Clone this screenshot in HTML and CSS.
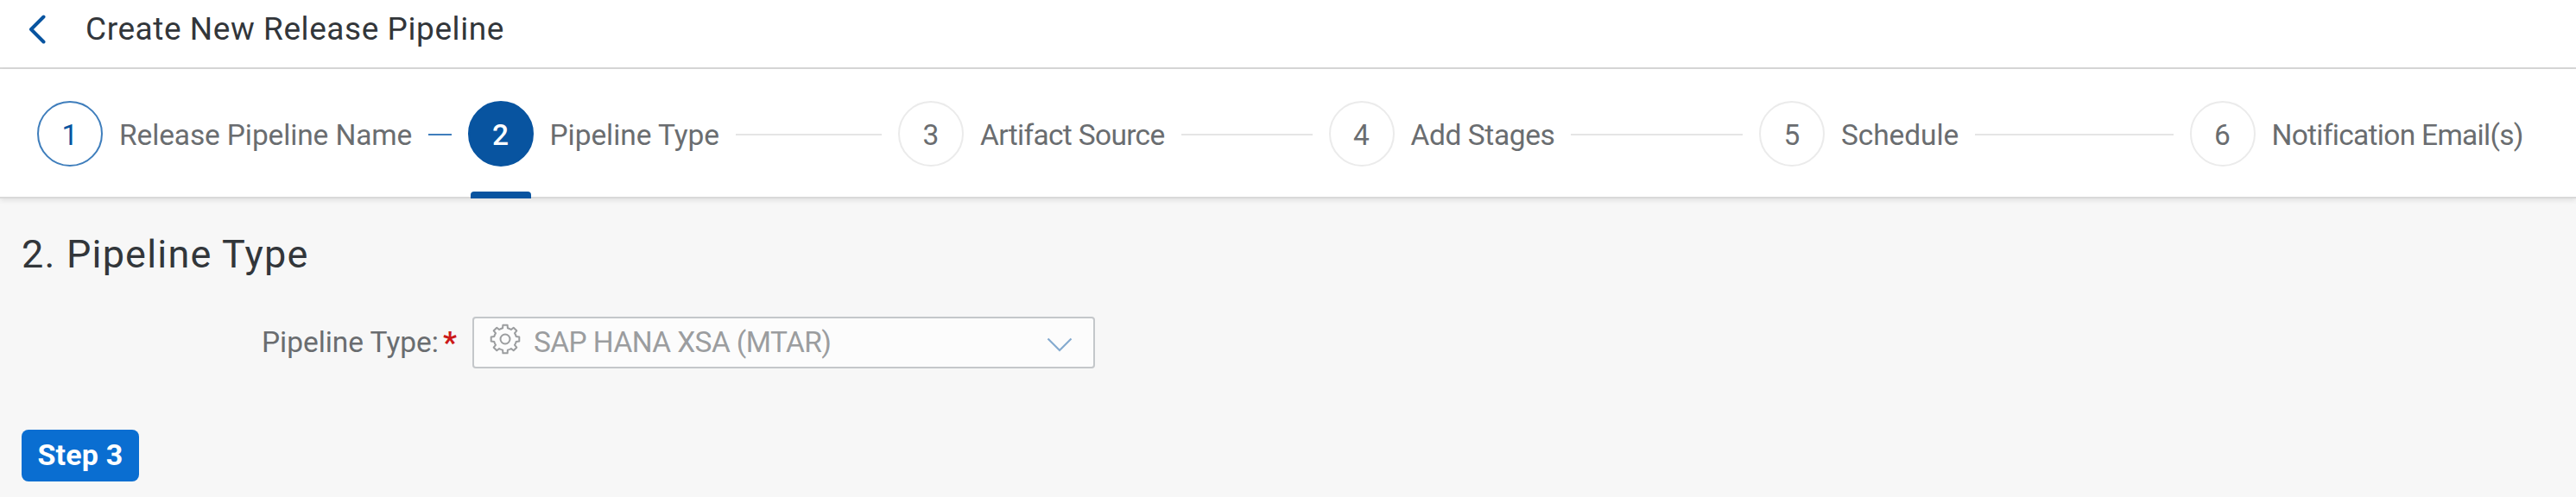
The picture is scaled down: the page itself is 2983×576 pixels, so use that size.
FILE: index.html
```html
<!DOCTYPE html>
<html lang="en">
<head>
<meta charset="utf-8">
<title>Create New Release Pipeline</title>
<link rel="stylesheet" href="styles.css">
</head>
<body>
<header class="page-header">
  <svg class="back" viewBox="0 0 20 34"><path d="M17.500 2.500 3 17l14.500 14.500"/></svg>
  <h1 class="title">Create New Release Pipeline</h1>
</header>
<nav class="wizard">
  <div class="step done"><span class="num">1</span><span class="label l1">Release Pipeline Name</span><span class="line"></span></div>
  <div class="step current"><span class="num">2</span><span class="label l2">Pipeline Type</span><span class="line"></span></div>
  <div class="step"><span class="num">3</span><span class="label l3">Artifact Source</span><span class="line"></span></div>
  <div class="step"><span class="num">4</span><span class="label l4">Add Stages</span><span class="line"></span></div>
  <div class="step"><span class="num">5</span><span class="label l5">Schedule</span><span class="line"></span></div>
  <div class="step last"><span class="num">6</span><span class="label l6">Notification Email(s)</span></div>
</nav>
<main class="content">
  <h2 class="heading"><span>2. Pipeline Type</span></h2>
  <div class="field">
    <span class="field-label">Pipeline Type:</span><span class="required">*</span>
    <div class="select">
      <svg class="gear" viewBox="-18 -18 36 36"><path d="M12.700-2.900 16.300-2.600V2.600L12.700 2.900A13 13 0 0 1 11 6.900L13.300 9.700 9.700 13.300 6.900 11A13 13 0 0 1 2.900 12.700L2.600 16.300H-2.600L-2.900 12.700A13 13 0 0 1-6.900 11L-9.700 13.300-13.300 9.700-11 6.900A13 13 0 0 1-12.700 2.900L-16.300 2.600V-2.600L-12.700-2.900A13 13 0 0 1-11-6.900L-13.300-9.700-9.700-13.300-6.900-11A13 13 0 0 1-2.900-12.700L-2.600-16.300H2.600L2.900-12.700A13 13 0 0 1 6.900-11L9.700-13.300 13.300-9.700 11-6.900A13 13 0 0 1 12.700-2.900Z"/><circle r="5.500"/></svg>
      <span class="value">SAP HANA XSA (MTAR)</span>
      <svg class="arrow" viewBox="0 0 30 18"><path d="M1.500 1.500 15 15 28.500 1.500"/></svg>
    </div>
  </div>
  <button class="next"><span>Step 3</span></button>
</main>
</body>
</html>
```
FILE: styles.css
```css
* { box-sizing: border-box; }
body { margin: 0; height: 576px; overflow: hidden; background: #f7f7f7; font-family: Roboto, "Liberation Sans", sans-serif; color: #32363a; }
svg { fill: none; flex: none; }
.page-header { height: 80px; display: flex; align-items: flex-start; padding: 17px 0 0 33px; background: #fff; border-bottom: 2px solid #d9d9d9; }
.back { width: 20px; height: 34px; stroke: #0854a0; stroke-width: 4; stroke-linecap: round; stroke-linejoin: round; }
.title { margin: -4px 0 0 46px; font-size: 37px; line-height: 42px; font-weight: 400; letter-spacing: .560px; white-space: nowrap; }
.wizard { height: 150px; display: flex; padding: 37px 59px 0 43px; background: #fff; border-bottom: 2px solid #d9d9d9; box-shadow: 0 2px 6px rgba(0,0,0,.1); }
.step { position: relative; flex: none; width: 498.500px; height: 76px; display: flex; align-items: center; color: #6a6d70; font-size: 33.500px; white-space: nowrap; }
.num { flex: none; width: 76px; height: 76px; margin-right: 19px; padding-top: 3px; border: 2px solid #ebebeb; border-radius: 50%; display: flex; align-items: center; justify-content: center; }
.label { flex: none; padding-top: 3px; }
.l1 { letter-spacing: -.130px; }
.l2 { letter-spacing: -.060px; }
.l3 { letter-spacing: -.670px; }
.l4 { letter-spacing: -.400px; }
.l5 { letter-spacing: -.100px; }
.l6 { letter-spacing: -.700px; }
.line { flex: 1; height: 2px; margin: 2px 19px 0; background: #e5e5e5; }
.done .num { border-color: #3f7ebc; color: #0854a0; }
.done .line { background: #3f7ebc; }
.current .num { background: #0854a0; border-color: #0854a0; color: #fff; font-weight: 500; }
.current::after { content: ""; position: absolute; left: 3.500px; top: 105px; width: 70px; height: 8px; background: #0854a0; border-radius: 4px 4px 0 0; }
.content { padding: 39px 25px 0; }
.heading { margin: 0; font-size: 45px; line-height: 52px; font-weight: 400; letter-spacing: 1.200px; }
.field { display: flex; align-items: center; margin-top: 46px; padding-left: 278px; height: 60px; font-size: 33.500px; color: #6a6d70; }
.field-label { width: 207px; margin-top: -2px; letter-spacing: -.050px; white-space: nowrap; }
.required { width: 37px; color: #cc1919; font-weight: 700; font-size: 35px; padding-left: 3px; }
.select { width: 721px; height: 60px; display: flex; align-items: center; padding: 0 24px 0 18px; background: #fcfcfc; border: 2px solid #c4c7ca; border-radius: 4px; color: #9b9d9f; }
.gear { width: 36px; height: 36px; margin: -8px 15px 0 0; stroke: #9b9d9f; stroke-width: 2; stroke-linejoin: round; }
.value { flex: 1; margin-top: -2px; letter-spacing: -.600px; white-space: nowrap; }
.arrow { width: 30px; height: 18px; margin-top: 5px; stroke: #84aacf; stroke-width: 2.200; }
.next { display: block; width: 136px; height: 60px; margin-top: 71px; padding: 0 0 2px; border: 0; border-radius: 8px; background: #0a6ed1; color: #fff; font: 700 34px/58px Roboto, sans-serif; letter-spacing: .200px; }
```
